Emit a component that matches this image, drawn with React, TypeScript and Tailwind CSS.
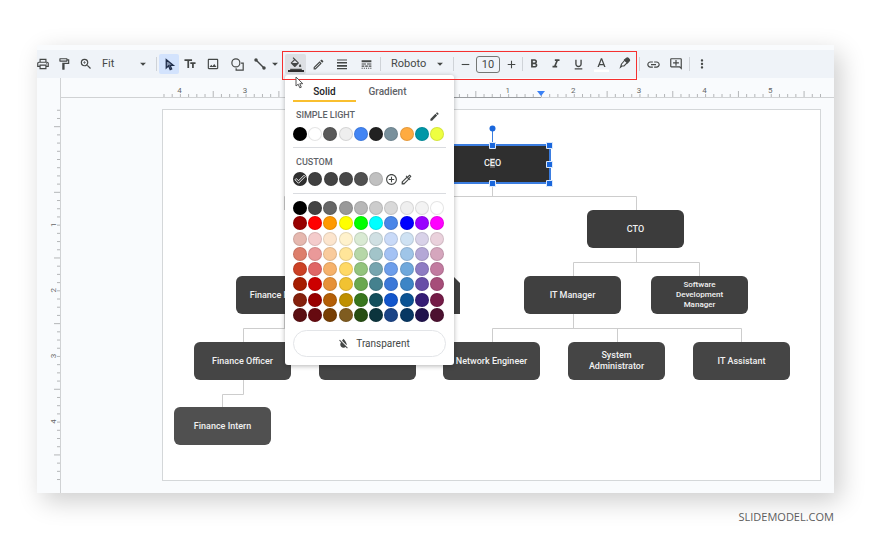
import { useState } from "react";
import type { ReactNode } from "react";
import clsx from "clsx";
import {
  MdAdd,
  MdAddCircleOutline,
  MdArrowDropDown,
  MdEdit,
  MdFormatBold,
  MdFormatColorFill,
  MdFormatColorReset,
  MdFormatItalic,
  MdFormatUnderlined,
  MdLineStyle,
  MdLink,
  MdMoreVert,
  MdOutlineAddComment,
  MdOutlineColorize,
  MdOutlineEdit,
  MdOutlineFormatPaint,
  MdOutlineImage,
  MdOutlinePrint,
  MdRemove,
  MdTextFields,
  MdZoomIn,
} from "react-icons/md";

const THEME_COLORS = ["#000000", "#ffffff", "#595959", "#eeeeee", "#4285f4", "#212121", "#78909c", "#ffab40", "#0097a7", "#eeff41"];

const CUSTOM_COLORS = ["#303030", "#404040", "#434343", "#484848", "#505050", "#c0c0c0"];

const PALETTE = [
  ["#000000", "#434343", "#666666", "#999999", "#b7b7b7", "#cccccc", "#d9d9d9", "#efefef", "#f3f3f3", "#ffffff"],
  ["#980000", "#ff0000", "#ff9900", "#ffff00", "#00ff00", "#00ffff", "#4a86e8", "#0000ff", "#9900ff", "#ff00ff"],
  ["#e6b8af", "#f4cccc", "#fce5cd", "#fff2cc", "#d9ead3", "#d0e0e3", "#c9daf8", "#cfe2f3", "#d9d2e9", "#ead1dc"],
  ["#dd7e6b", "#ea9999", "#f9cb9c", "#ffe599", "#b6d7a8", "#a2c4c9", "#a4c2f4", "#9fc5e8", "#b4a7d6", "#d5a6bd"],
  ["#cc4125", "#e06666", "#f6b26b", "#ffd966", "#93c47d", "#76a5af", "#6d9eeb", "#6fa8dc", "#8e7cc3", "#c27ba0"],
  ["#a61c00", "#cc0000", "#e69138", "#f1c232", "#6aa84f", "#45818e", "#3c78d8", "#3d85c6", "#674ea7", "#a64d79"],
  ["#85200c", "#990000", "#b45f06", "#bf9000", "#38761d", "#134f5c", "#1155cc", "#0b5394", "#351c75", "#741b47"],
  ["#5b0f12", "#660a10", "#783f04", "#7f5c20", "#274e13", "#0c343d", "#1c4587", "#073763", "#20124d", "#4c1130"],
];

const NODES = [
  { label: "CTO", place: "left-[424px] top-[100px]", tone: "bg-[#3c3c3c]" },
  { label: "Finance Manager", place: "left-[73px] top-[166px]", tone: "bg-[#404040]" },
  { label: "IT Manager", place: "left-[361px] top-[166px]", tone: "bg-[#404040]" },
  { label: "Software Development Manager", place: "left-[488px] top-[166px]", tone: "bg-[#404040]", small: true },
  { label: "Finance Officer", place: "left-[31px] top-[232px]", tone: "bg-[#454545]" },
  { label: "", place: "left-[156px] top-[232px]", tone: "bg-[#454545]" },
  { label: "Network Engineer", place: "left-[280px] top-[232px]", tone: "bg-[#454545]" },
  { label: "System Administrator", place: "left-[405px] top-[232px]", tone: "bg-[#454545]" },
  { label: "IT Assistant", place: "left-[530px] top-[232px]", tone: "bg-[#454545]" },
  { label: "Finance Intern", place: "left-[11px] top-[297px]", tone: "bg-[#505050]" },
];

// one ruler unit in pixels, split into 8 ticks
const UNIT = 65.65;

function range(from: number, to: number) {
  return Array.from({ length: to - from + 1 }, (_, i) => from + i);
}

function ToolButton({ label, className, children }: { label: string; className?: string; children: ReactNode }) {
  return (
    <button aria-label={label} className={clsx("flex h-5 shrink-0 items-center justify-center", className ?? "w-6")}>
      {children}
    </button>
  );
}

function Divider({ className }: { className?: string }) {
  return <div className={clsx("h-3.5 w-px shrink-0 bg-[#cfd3d8]", className)} />;
}

function Dropdown({ label, value, className, pad }: { label: string; value: string; className: string; pad: string }) {
  return (
    <div className={clsx("relative flex shrink-0 items-center", className)}>
      <select aria-label={label} className={clsx("w-full appearance-none bg-transparent text-[11px] leading-4 outline-none", pad)}>
        <option>{value}</option>
      </select>
      <MdArrowDropDown size={14} className="pointer-events-none absolute right-1.5" />
    </div>
  );
}

function ShapesIcon() {
  return (
    <svg width="13" height="13" viewBox="0 0 24 24" fill="none" stroke="currentColor" strokeWidth="2.2">
      <circle cx="9" cy="9" r="7.4" />
      <path d="M18.5 9.5H22.5V22.5H9.5V18.8" />
    </svg>
  );
}

function LineIcon() {
  return (
    <svg width="12" height="12" viewBox="0 0 24 24" stroke="currentColor" strokeWidth="3">
      <path d="M4 4L20 20" />
      <circle cx="4" cy="4" r="2" fill="currentColor" />
      <circle cx="20" cy="20" r="2" fill="currentColor" />
    </svg>
  );
}

function CursorIcon() {
  return (
    <svg width="13" height="13" viewBox="0 0 24 24" fill="#3c4a66" stroke="#1f2d4a" strokeWidth="2.4">
      <path d="M6 3V18.5L10.2 14.5L13.3 21.5L16 20.3L13 13.5H19Z" fillOpacity="0.5" />
    </svg>
  );
}

function WeightIcon() {
  return (
    <svg width="12" height="12" viewBox="0 0 24 24" fill="currentColor">
      <path d="M2 3h20v2H2zM2 8h20v3H2zM2 14h20v3.5H2zM2 20h20v2.5H2z" />
    </svg>
  );
}

function HighlighterIcon() {
  return (
    <svg width="12" height="14" viewBox="0 0 24 28" fill="none" stroke="currentColor" strokeWidth="2.2">
      <path d="M5 14L12 6L17 11L10 18H6L3 20.5Z" />
      <path d="M11 6L15 2.5Q17 1 19 3L20.500 4.500Q22 6.500 20.500 8L17 12Z" fill="currentColor" />
    </svg>
  );
}

function Swatch({ color, checked }: { color: string; checked?: boolean }) {
  return (
    <button
      aria-label={color}
      className="flex size-[14px] items-center justify-center rounded-full border border-black/10"
      style={{ backgroundColor: color }}
    >
      {checked && (
        <svg width="12" height="12" viewBox="0 0 24 24" className="shrink-0" fill="none" stroke="#fff" strokeWidth="1.8">
          <path d="M2 13.5L4.5 11L9 15.5L20 4.5L22.5 7L9 20.5Z" />
        </svg>
      )}
    </button>
  );
}

function FillPopover() {
  const [tab, setTab] = useState("Solid");

  return (
    <div className="absolute left-0 top-[21px] z-10 w-[169px] rounded-[3px] bg-white px-2 pb-2 pt-[5px] shadow-[0_1px_5px_rgba(0,0,0,0.3)]">
      <div className="flex">
        {["Solid", "Gradient"].map((name) => (
          <button
            key={name}
            onClick={() => setTab(name)}
            className={clsx(
              "h-[22px] w-[63px] border-b-2 pt-0.5 text-[10px] font-medium",
              tab === name ? "border-[#f9bf2f] text-[#202124]" : "border-transparent text-[#5f6368]"
            )}
          >
            {name}
          </button>
        ))}
      </div>
      <div className="mt-2 flex h-3 items-center justify-between pl-[3px] pr-1.5">
        <h2 className="text-[9px] font-medium text-[#5f6368]">SIMPLE LIGHT</h2>
        <button aria-label="Edit theme colors">
          <MdEdit size={11} />
        </button>
      </div>
      <div className="mt-[5px] flex w-[151px] justify-between">
        {THEME_COLORS.map((color) => (
          <Swatch key={color} color={color} />
        ))}
      </div>
      <div className="mt-1.5 h-px bg-[#dadce0]" />
      <h2 className="mt-2 pl-[3px] text-[9px] font-medium leading-3 text-[#5f6368]">CUSTOM</h2>
      <div className="mt-1 flex w-[121px] justify-between">
        {CUSTOM_COLORS.map((color, i) => (
          <Swatch key={color} color={color} checked={i === 0} />
        ))}
        <button aria-label="Add custom color" className="flex size-[14px] items-center justify-center">
          <MdAddCircleOutline size={13} className="shrink-0" />
        </button>
        <button aria-label="Pick a color" className="flex size-[14px] items-center justify-center">
          <MdOutlineColorize size={13} className="shrink-0" />
        </button>
      </div>
      <div className="mt-[7px] h-px bg-[#dadce0]" />
      <div className="mt-[7px] flex h-[121px] w-[151px] flex-col justify-between">
        {PALETTE.map((row) => (
          <div key={row[0]} className="flex justify-between">
            {row.map((color) => (
              <Swatch key={color} color={color} />
            ))}
          </div>
        ))}
      </div>
      <button className="mt-2 flex h-[27px] w-full items-center justify-center gap-1.5 rounded-full border border-[#e3e5e8] pl-2 text-[10px]">
        <MdFormatColorReset size={13} />
        Transparent
      </button>
    </div>
  );
}

function Toolbar() {
  return (
    <div className="flex h-7 items-center bg-[#eff3f8] text-[#444746]">
      <ToolButton label="Print" className="w-3">
        <MdOutlinePrint size={14} className="shrink-0" />
      </ToolButton>
      <ToolButton label="Paint format" className="ml-1 w-[22px]">
        <MdOutlineFormatPaint size={14} />
      </ToolButton>
      <ToolButton label="Zoom" className="w-[22px]">
        <MdZoomIn size={14} />
      </ToolButton>
      <Dropdown label="Zoom level" value="Fit" className="w-[59px]" pad="pl-[5px]" />
      <Divider className="mr-0.5" />
      <ToolButton label="Select" className="w-5 rounded-[2px] bg-[#d3e3fd]">
        <CursorIcon />
      </ToolButton>
      <ToolButton label="Text box" className="w-[22px]">
        <MdTextFields size={14} />
      </ToolButton>
      <ToolButton label="Insert image">
        <MdOutlineImage size={14} />
      </ToolButton>
      <ToolButton label="Shape">
        <ShapesIcon />
      </ToolButton>
      <ToolButton label="Line" className="w-[22px]">
        <LineIcon />
      </ToolButton>
      <ToolButton label="Line options" className="w-2">
        <MdArrowDropDown size={14} className="shrink-0" />
      </ToolButton>

      {/* formatting group, outlined in red */}
      <div className="relative ml-[3px] flex shrink-0 items-center pl-[3px]">
        <div className="relative">
          <button
            aria-label="Fill color"
            aria-expanded="true"
            className="flex h-5 w-[21px] flex-col items-center justify-center rounded-[2px] bg-[#dcdfe3]"
          >
            <MdFormatColorFill size={14} viewBox="0 -2 24 24" />
            <span className="h-0.5 w-4 bg-[#303030]" />
          </button>
          <FillPopover />
          <svg className="absolute left-2.5 top-[22px] z-30" width="10" height="13" viewBox="0 0 10 13" fill="#fff" stroke="#555" strokeWidth="1">
            <path d="M1 1V10L3.2 8.2L4.8 11.8L6.3 11.2L4.8 7.7H7.8Z" />
          </svg>
        </div>
        <ToolButton label="Border color">
          <MdOutlineEdit size={13} />
        </ToolButton>
        <ToolButton label="Border weight">
          <WeightIcon />
        </ToolButton>
        <ToolButton label="Border dash">
          <MdLineStyle size={13} />
        </ToolButton>
        <Divider className="ml-0.5" />
        <Dropdown label="Font" value="Roboto" className="w-[72px]" pad="pl-2.5" />
        <Divider />
        <ToolButton label="Decrease font size" className="w-[22px]">
          <MdRemove size={13} />
        </ToolButton>
        <input
          aria-label="Font size"
          defaultValue="10"
          className="h-[17px] w-6 shrink-0 rounded-[3px] border border-[#747775] text-center text-[11px] outline-none"
        />
        <ToolButton label="Increase font size" className="w-[22px]">
          <MdAdd size={13} />
        </ToolButton>
        <Divider />
        <ToolButton label="Bold" className="w-[22px]">
          <MdFormatBold size={14} />
        </ToolButton>
        <ToolButton label="Italic" className="w-[22px]">
          <MdFormatItalic size={14} />
        </ToolButton>
        <ToolButton label="Underline" className="w-[22px]">
          <MdFormatUnderlined size={13} />
        </ToolButton>
        <ToolButton label="Text color">
          <svg width="15" height="15" viewBox="0 0 24 24">
            <path d="M0 20h24v4H0z" fill="#fff" />
            <path d="M11 2L5.5 16h2.250l1.120-3h6.250l1.120 3h2.250L13 2h-2zm-1.380 9L12 4.670 14.380 11H9.620z" fill="currentColor" />
          </svg>
        </ToolButton>
        <ToolButton label="Highlight color">
          <HighlighterIcon />
        </ToolButton>
        <div className="pointer-events-none absolute -bottom-1.5 -top-[3px] left-0 right-0 z-20 border border-[#f5302f]" />
      </div>

      <Divider className="ml-0.5" />
      <ToolButton label="Insert link" className="w-[26px]">
        <MdLink size={15} />
      </ToolButton>
      <ToolButton label="Add comment" className="w-5">
        <MdOutlineAddComment size={14} />
      </ToolButton>
      <Divider className="ml-[3px]" />
      <ToolButton label="More">
        <MdMoreVert size={14} />
      </ToolButton>
    </div>
  );
}

function HorizontalRuler() {
  return (
    <div className="ml-[23px] h-5 border-b border-l border-[#d0d2d4] pl-[101px]">
      <svg width="660" height="19" viewBox="0 0 660 19" className="overflow-visible">
        {range(-34, 46).map((k) => (
          <path key={k} d={`M${281 + (k * UNIT) / 8} 19v${Math.abs(k % 8) === 4 ? -6 : -3}`} stroke="#b4b6b8" />
        ))}
        {/* units -2 to 0 sit under the fill popover */}
        {[-4, -3, 1, 2, 3, 4, 5].map((n) => (
          <text key={n} x={280 + n * UNIT} y="15" textAnchor="middle" className="fill-[#666] text-[8px]">
            {Math.abs(n)}
          </text>
        ))}
        <path d="M292 19.5H379" stroke="#9a9da0" />
        <path d="M375 13h8l-4 5z" fill="#3b82f6" />
      </svg>
    </div>
  );
}

function VerticalRuler() {
  return (
    <svg width="23" height="395" viewBox="0 0 23 395" className="shrink-0">
      {range(-6, 39).map((k) => (
        <path key={k} d={`M23 ${61.5 + (k * UNIT) / 8}h${Math.abs(k % 8) === 4 ? -6 : -3}`} stroke="#b4b6b8" />
      ))}
      {range(1, 4).map((n) => (
        <text
          key={n}
          transform={`translate(19 ${61 + n * UNIT}) rotate(-90)`}
          textAnchor="middle"
          className="fill-[#666] text-[8px]"
        >
          {n}
        </text>
      ))}
    </svg>
  );
}

function Slide() {
  return (
    <div className="relative h-[372px] border border-[#d4d7d9] bg-white">
      <svg className="absolute left-0 top-0" width="656" height="370" viewBox="0 0 656 370" fill="none" stroke="#cdcdcd">
        <path d="M329.5 73V86.5M121.5 100V86.5H473.5V100" />
        <path d="M473.5 138V152.5M410.5 166V152.5H536.5V166" />
        <path d="M410.5 204V218.5M329.5 232V218.5H578.5V232M454.5 218.5V232" />
        <path d="M121.5 204V218.5M80.5 232V218.5H204.5V232" />
        <path d="M80.5 270V284.5H59.5V297" />
        <path d="M200 167H291L297 173V204H200Z" fill="#404040" stroke="none" />
      </svg>

      {NODES.map((node) => (
        <div
          key={node.place}
          className={clsx(
            "absolute flex h-[38px] w-[97px] items-center justify-center rounded-md px-2.5 text-center font-medium text-[#f1f1f1]",
            node.place,
            node.tone,
            node.small ? "text-[8px] leading-[10px]" : "text-[9px] leading-[11px]"
          )}
        >
          {node.label}
        </div>
      ))}

      <div className="absolute left-[271px] top-[34px] flex h-10 w-[117px] items-center justify-center border-2 border-[#3b7de0] bg-[#2f2f2f] text-[9px] font-medium text-[#f1f1f1]">
        <span>
          C<span className="bg-[#666]">E</span>O
        </span>
      </div>
      <svg className="absolute left-[320px] top-2" width="75" height="76" viewBox="0 0 75 76" fill="#1a67dc">
        <path d="M9.5 10V28" stroke="#3b7de0" />
        <circle cx="9.5" cy="10.5" r="3" />
        <g stroke="#dbe8fb" strokeWidth="1">
          <path d="M6.5 24.5h6v6h-6zM63.5 24.5h6v6h-6zM63.5 43.5h6v6h-6zM63.5 62.5h6v6h-6zM6.5 62.5h6v6h-6z" />
        </g>
      </svg>
    </div>
  );
}

export default function App() {
  return (
    <main className="min-h-screen bg-white pb-3 pl-[37px] pr-9 pt-[45px] font-['Roboto',sans-serif]">
      <section className="bg-[#f9fbfd] pt-[5px] shadow-[6px_8px_24px_rgba(0,0,0,0.2)]">
        <Toolbar />
        <HorizontalRuler />
        <div className="flex">
          <VerticalRuler />
          <div className="grow border-l border-[#d0d2d4] pb-[11px] pl-[101px] pr-[13px] pt-[11px]">
            <Slide />
          </div>
        </div>
      </section>
      <footer className="mt-4 text-right font-['Open_Sans',sans-serif] text-[11px] leading-4 text-[#5c5c5c]">SLIDEMODEL.COM</footer>
    </main>
  );
}
